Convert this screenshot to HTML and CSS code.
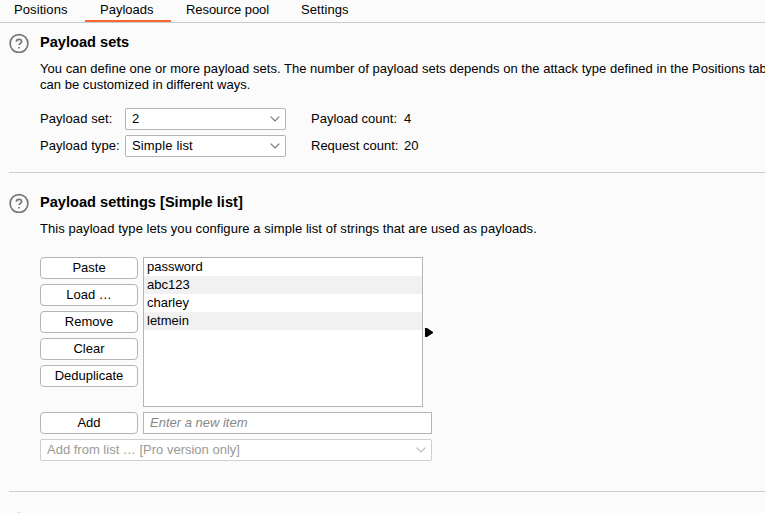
FILE: index.html
```html
<!DOCTYPE html>
<html lang="en">
<head>
<meta charset="utf-8">
<title>Payloads</title>
<link rel="stylesheet" href="styles.css">
</head>
<body>
<nav class="tabs">
  <a class="tab tab-positions">Positions</a>
  <a class="tab tab-payloads active">Payloads</a>
  <a class="tab tab-pool">Resource pool</a>
  <a class="tab tab-settings">Settings</a>
</nav>
<section class="section sets">
  <svg class="help" viewBox="0 0 20 20"><circle cx="10" cy="10.5" r="8.9"/><path d="M7.4 8.7C7.4 7.2 8.5 6.3 10 6.3s2.6.9 2.6 2.3c0 1.8-2.5 1.9-2.5 3.5"/><path d="M10 14v1.5"/></svg>
  <div class="body">
    <h2>Payload sets</h2>
    <p class="intro"><span class="line-a">You can define one or more payload sets. The number of payload sets depends on the attack type defined in the Positions tab</span><br><span class="line-b">can be customized in different ways.</span></p>
    <div class="form">
      <label>Payload set:</label>
      <div class="select"><span>2</span><svg class="chevron" viewBox="0 0 10 6"><path d="M.7.7 5 5 9.3.7"/></svg></div>
      <span class="count">Payload count:</span><span>4</span>
      <label>Payload type:</label>
      <div class="select"><span>Simple list</span><svg class="chevron" viewBox="0 0 10 6"><path d="M.7.7 5 5 9.3.7"/></svg></div>
      <span class="count">Request count:</span><span>20</span>
    </div>
  </div>
</section>
<section class="section settings">
  <svg class="help" viewBox="0 0 20 20"><circle cx="10" cy="10.5" r="8.9"/><path d="M7.4 8.7C7.4 7.2 8.5 6.3 10 6.3s2.6.9 2.6 2.3c0 1.8-2.5 1.9-2.5 3.5"/><path d="M10 14v1.5"/></svg>
  <div class="body">
    <h2>Payload settings [Simple list]</h2>
    <p class="intro"><span class="line-c">This payload type lets you configure a simple list of strings that are used as payloads.</span></p>
    <div class="editor">
      <div class="buttons">
        <button>Paste</button>
        <button>Load …</button>
        <button>Remove</button>
        <button>Clear</button>
        <button>Deduplicate</button>
      </div>
      <ul class="list">
        <li>password</li>
        <li>abc123</li>
        <li>charley</li>
        <li>letmein</li>
      </ul>
      <svg class="marker" viewBox="0 0 8 9"><path d="M0 0h2l6 4v1L2 9H0z"/></svg>
    </div>
    <div class="add-row">
      <button>Add</button>
      <div class="field">Enter a new item</div>
    </div>
    <div class="select disabled"><span>Add from list … [Pro version only]</span><svg class="chevron" viewBox="0 0 10 6"><path d="M.7.7 5 5 9.3.7"/></svg></div>
  </div>
</section>
<section class="section next">
  <svg class="help" viewBox="0 0 20 20"><circle cx="10" cy="10.5" r="8.9"/></svg>
</section>
</body>
</html>
```
FILE: styles.css
```css
* { box-sizing: border-box; }
body {
  margin: 0;
  height: 513px;
  overflow: hidden;
  background: #fbfbfb;
  color: #000;
  font: 13px/16px "Liberation Sans", Arial, sans-serif;
  white-space: nowrap;
}
.tabs { display: flex; height: 23px; border-bottom: 1px solid #c5cdcc; }
.tab { height: 22px; padding-top: 2px; }
.tab-positions { width: 85px; padding-left: 14px; letter-spacing: .09px; }
.tab-payloads { width: 86px; padding-left: 15px; }
.tab-pool { width: 115px; padding-left: 15px; letter-spacing: -.06px; }
.tab-settings { padding-left: 15px; letter-spacing: .08px; }
.tab.active { border-bottom: 2px solid #ff6633; }
.section {
  display: flex;
  margin-left: 9px;
  border-bottom: 1px solid #cdcdcd;
}
.sets { height: 150px; padding-top: 10px; }
.settings { height: 319px; padding-top: 20px; }
.next { padding-top: 20px; border-bottom: 0; }
.help {
  flex: none;
  width: 20px;
  height: 20px;
  margin-right: 11px;
  fill: none;
  stroke: #777;
  stroke-width: 1.7;
}
h2 { margin: 0; font-size: 14.6px; line-height: 18px; font-weight: bold; }
.intro { margin: 10px 0 0; }
.line-a { letter-spacing: .028px; }
.line-b { letter-spacing: .03px; }
.line-c { letter-spacing: .062px; }
.form {
  display: grid;
  grid-template-columns: 85px 161px 118px auto;
  grid-auto-rows: 22px;
  row-gap: 5px;
  align-items: center;
  margin-top: 15px;
}
.form label { letter-spacing: .07px; }
.form .select { letter-spacing: .15px; }
.count { padding-left: 25px; }
.select {
  display: flex;
  align-items: center;
  justify-content: space-between;
  height: 22px;
  padding: 0 5px 0 6px;
  background: #fff;
  border: 1px solid #b9b4b4;
  border-radius: 2px;
}
.chevron { width: 10px; height: 6px; fill: none; stroke: #777; stroke-width: 1.2; }
.editor { display: flex; margin-top: 20px; height: 150px; }
.buttons { display: flex; flex-direction: column; gap: 5px; margin-right: 5px; }
button {
  width: 98px;
  height: 22px;
  padding: 0;
  background: #fff;
  color: #000;
  border: 1px solid #b9b4b4;
  border-radius: 4px;
  font: inherit;
}
.list {
  width: 280px;
  margin: 0;
  padding: 0;
  list-style: none;
  background: #fff;
  border: 1px solid #b9b4b4;
}
.list li { height: 18px; padding-left: 3px; line-height: 18px; }
.list li:nth-child(even) { background: #f1f1f1; }
.marker { width: 8px; height: 9px; margin: 71px 0 0 2px; }
.add-row { display: flex; gap: 5px; margin: 5px 0; }
.field {
  width: 289px;
  height: 22px;
  padding-left: 6px;
  background: #fff;
  border: 1px solid #b9b4b4;
  color: #888;
  font-style: italic;
  line-height: 20px;
}
.select.disabled { width: 392px; color: #999; border-color: #cfcfcf; }
.disabled .chevron { stroke: #bbb; }
```
